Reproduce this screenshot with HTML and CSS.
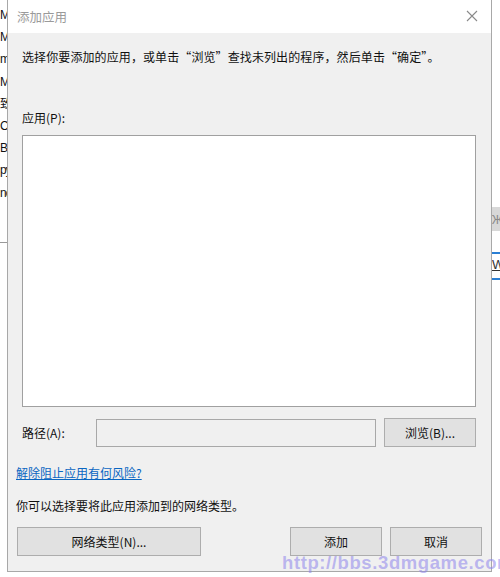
FILE: index.html
```html
<!DOCTYPE html>
<html lang="zh-CN">
<head>
<meta charset="utf-8">
<link rel="stylesheet" href="styles.css">
</head>
<body>
<div class="desk">
  <div class="left-strip">
    <div class="bg-lines">
      <span>Mi</span><span>Mi</span><span>mi</span><span>Mi</span><span>致</span><span>Cl</span><span>Bu</span><span>py</span><span>nc</span>
    </div>
    <div class="bg-rule"></div>
  </div>
  <div class="dialog">
    <div class="titlebar">
      <span class="title">添加应用</span>
      <svg class="close" width="12" height="12" viewBox="0 0 12 12"><path d="M1 1L11 11M11 1L1 11" stroke="#8a8a8a" stroke-width="1.1" fill="none"/></svg>
    </div>
    <div class="body">
      <p class="intro">选择你要添加的应用，或单击“浏览”查找未列出的程序，然后单击“确定”。</p>
      <p class="label apps-label">应用(P):</p>
      <div class="listbox"></div>
      <div class="path-row">
        <span class="label">路径(A):</span>
        <div class="path-input"></div>
        <button class="btn browse">浏览(B)...</button>
      </div>
      <a class="link" href="#">解除阻止应用有何风险?</a>
      <p class="net-text">你可以选择要将此应用添加到的网络类型。</p>
      <div class="btn-row">
        <button class="btn net">网络类型(N)...</button>
        <div class="spacer"></div>
        <button class="btn add">添加</button>
        <button class="btn cancel">取消</button>
      </div>
    </div>
  </div>
  <div class="right-strip">
    <div class="r-box">Ж</div>
    <div class="r-link">W</div>
  </div>
</div>
<div class="watermark">http://bbs.3dmgame.com/</div>
</body>
</html>
```
FILE: styles.css
```css
html, body {
  margin: 0;
  padding: 0;
  background: #ffffff;
  width: 500px;
  height: 577px;
  overflow: hidden;
  font-family: "Noto Sans CJK SC", "Noto Sans", sans-serif;
  font-size: 12px;
  color: #111111;
}
.desk {
  display: flex;
  height: 577px;
}
.left-strip {
  width: 7px;
  overflow: hidden;
  flex: none;
}
.bg-lines {
  display: flex;
  flex-direction: column;
  padding-top: 4px;
  font-family: "Liberation Sans", "Noto Sans CJK SC", sans-serif;
  font-size: 12px;
  letter-spacing: -1px;
  line-height: 22.2px;
  color: #111;
  white-space: nowrap;
}
.bg-rule {
  margin-top: 38px;
  height: 1px;
  background: #999;
}
.dialog {
  width: 483px;
  height: 571px;
  border: 1px solid #a8a8a8;
  border-top: none;
  background: #f0f0f0;
  flex: none;
  display: flex;
  flex-direction: column;
}
.titlebar {
  height: 33px;
  background: #ffffff;
  display: flex;
  align-items: center;
  justify-content: space-between;
  padding: 0 13px 0 9px;
  flex: none;
}
.title {
  color: #9a9a9a;
  font-size: 12.5px;
}
.close { display: block; margin-top: -2px; }
.body {
  display: flex;
  flex-direction: column;
  padding: 0 9px 0 8px;
}
.intro {
  margin: 15px 0 0 6px;
  line-height: 18px;
  font-size: 12px;
  white-space: nowrap;
  letter-spacing: 0.1px;
}
.label {
  line-height: 18px;
}
.apps-label {
  margin: 43px 0 0 6px;
}
.listbox {
  margin: 8px 6px 0 6px;
  height: 270px;
  background: #ffffff;
  border: 1px solid #a0a0a0;
}
.path-row {
  display: flex;
  align-items: center;
  margin: 11px 5px 0 6px;
}
.path-row .label { width: 74px; }
.path-input {
  width: 280px;
  height: 28px;
  border: 1px solid #a8a8a8;
  background: #f0f0f0;
  box-sizing: border-box;
}
.btn {
  font-family: "Noto Sans CJK SC", "Noto Sans", sans-serif;
  font-size: 12px;
  color: #111111;
  background: #e1e1e1;
  border: 1px solid #adadad;
  padding: 0;
  height: 29px;
  box-sizing: border-box;
}
.browse {
  width: 92px;
  margin-left: 8px;
}
.link {
  margin: 17px 0 0 0;
  color: #0a66c2;
  text-decoration: underline;
  line-height: 18px;
  align-self: flex-start;
}
.net-text {
  margin: 15px 0 0 0;
  line-height: 18px;
}
.btn-row {
  display: flex;
  margin-top: 12px;
  padding-left: 1px;
}
.net { width: 184px; }
.spacer { flex: 1; }
.add { width: 92px; }
.cancel { width: 92px; margin-left: 8px; }
.right-strip {
  flex: 1;
  overflow: hidden;
  display: flex;
  flex-direction: column;
}
.r-box {
  margin-top: 207px;
  height: 24px;
  width: 14px;
  background: #d8d8d8;
  color: #888;
  font-size: 12px;
  line-height: 24px;
}
.r-link {
  margin-top: 21px;
  height: 24px;
  border-top: 2px solid #2a7fd4;
  border-bottom: 2px solid #2a7fd4;
  color: #333;
  text-decoration: underline;
  font-size: 13px;
  line-height: 22px;
  font-family: "Liberation Sans", sans-serif;
}
.watermark {
  position: absolute;
  left: 282px;
  top: 552px;
  font-family: "Liberation Sans", sans-serif;
  font-weight: bold;
  font-size: 18.5px;
  color: rgba(140, 130, 235, 0.55);
  letter-spacing: 0.6px;
  white-space: nowrap;
}
```
